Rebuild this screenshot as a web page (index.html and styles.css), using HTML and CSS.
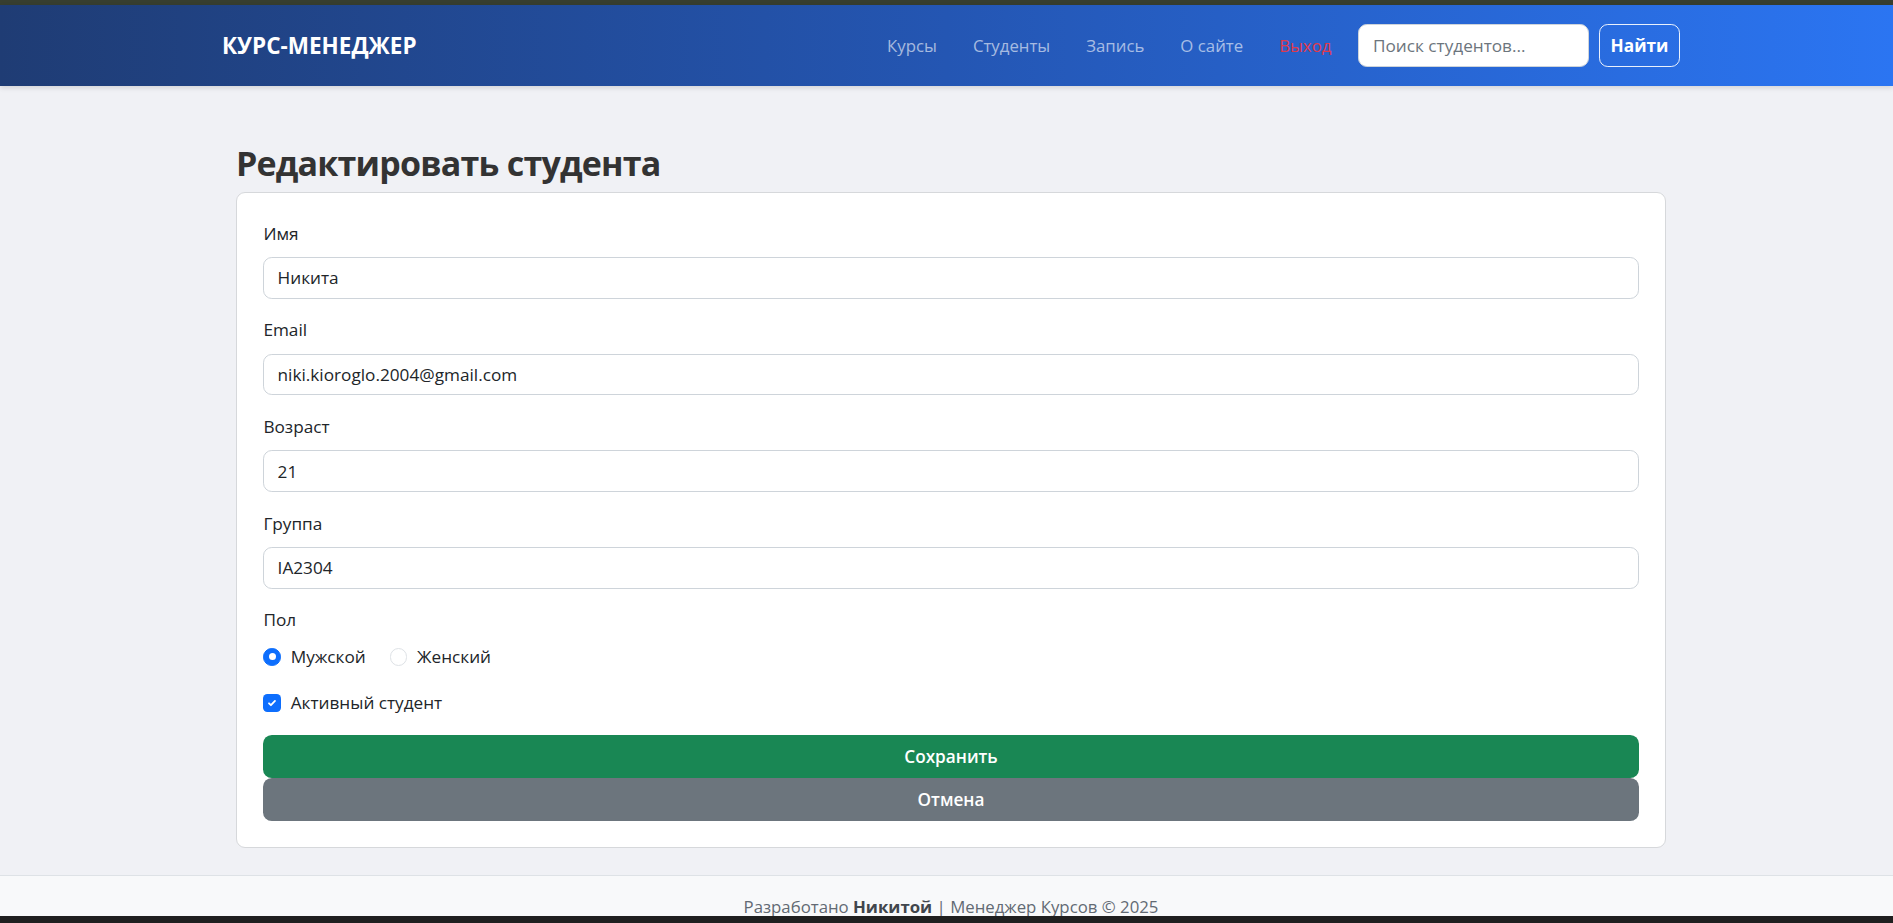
FILE: index.html
```html
<!DOCTYPE html>
<html lang="ru">
<head>
<meta charset="utf-8">
<title>Редактировать студента</title>
<link rel="stylesheet" href="styles.css">
</head>
<body>
<div class="topstrip"></div>
<nav class="navbar">
  <div class="nav-inner">
    <a class="brand" href="#">КУРС-МЕНЕДЖЕР</a>
    <div class="nav-right">
      <ul class="nav-links">
        <li><a href="#">Курсы</a></li>
        <li><a href="#">Студенты</a></li>
        <li><a href="#">Запись</a></li>
        <li><a href="#">О сайте</a></li>
        <li><a href="#" class="logout">Выход</a></li>
      </ul>
      <form class="search">
        <input type="text" class="search-input" placeholder="Поиск студентов...">
        <button type="button" class="search-btn">Найти</button>
      </form>
    </div>
  </div>
</nav>

<main class="main">
  <h2 class="title">Редактировать студента</h2>
  <div class="card">
    <form class="edit-form">
      <div class="field">
        <label class="form-label">Имя</label>
        <input class="form-control" type="text" value="Никита">
      </div>
      <div class="field">
        <label class="form-label">Email</label>
        <input class="form-control" type="text" value="niki.kioroglo.2004@gmail.com">
      </div>
      <div class="field">
        <label class="form-label">Возраст</label>
        <input class="form-control" type="text" value="21">
      </div>
      <div class="field">
        <label class="form-label">Группа</label>
        <input class="form-control" type="text" value="IA2304">
      </div>
      <div class="field field-gender">
        <label class="form-label">Пол</label>
        <div class="radios">
          <label class="choice"><span class="radio radio-on"></span>Мужской</label>
          <label class="choice"><span class="radio"></span>Женский</label>
        </div>
      </div>
      <div class="check-row">
        <label class="choice"><span class="checkbox"><svg viewBox="0 0 20 20" width="12" height="12"><path d="M5 10.5l3.2 3.2L15 6.5" fill="none" stroke="#fff" stroke-width="3" stroke-linecap="round" stroke-linejoin="round"/></svg></span>Активный студент</label>
      </div>
      <div class="actions">
        <button type="button" class="btn btn-save">Сохранить</button>
        <button type="button" class="btn btn-cancel">Отмена</button>
      </div>
    </form>
  </div>
</main>

<footer class="footer">
  <div class="footer-inner">
    <p>Разработано <strong>Никитой</strong> | Менеджер Курсов © 2025</p>
  </div>
</footer>
<div class="taskbar"></div>
</body>
</html>
```

FILE: styles.css
```css
html, body {
  margin: 0;
  padding: 0;
}
body {
  background: #f0f1f5;
  font-family: "Open Sans", "Noto Sans", sans-serif;
  font-size: 17.2px;
  line-height: 1.5;
  color: #212529;
}

.topstrip {
  height: 5px;
  background: #373e2f;
}

.navbar {
  height: 81px;
  background: linear-gradient(90deg, #1f3c74 0%, #2456b3 50%, #2b75f2 100%);
  box-shadow: 0 2px 5px rgba(0, 0, 0, 0.12);
  display: flex;
  align-items: center;
  position: relative;
}
.nav-inner {
  margin-left: 222px;
  width: 1458px;
  display: flex;
  align-items: center;
  justify-content: space-between;
}
.brand {
  color: #fff;
  font-weight: 700;
  font-size: 22.5px;
  text-decoration: none;
}
.nav-right {
  display: flex;
  align-items: center;
}
.nav-links {
  display: flex;
  list-style: none;
  margin: 0;
  padding: 0;
}
.nav-links a {
  display: block;
  padding: 8px 18px;
  color: rgba(255, 255, 255, 0.6);
  text-decoration: none;
  font-size: 16.8px;
}
.nav-links a.logout {
  color: #e03a4c;
}
.search {
  display: flex;
  gap: 10px;
  margin: 0 0 0 8.6px;
}
.search-input {
  width: 231px;
  height: 43px;
  box-sizing: border-box;
  border: 1px solid #ced4da;
  border-radius: 8.8px;
  padding: 0 14px;
  font-family: inherit;
  font-size: 17.2px;
  color: #212529;
  background: #fff;
}
.search-input::placeholder {
  color: #6c757d;
}
.search-btn {
  width: 81px;
  height: 43px;
  box-sizing: border-box;
  border: 1px solid rgba(255, 255, 255, 0.9);
  border-radius: 8.8px;
  background: transparent;
  color: #fff;
  font-family: inherit;
  font-weight: 700;
  font-size: 17.2px;
}

.main {
  margin-left: 236px;
  width: 1430px;
  padding-top: 56.5px;
}
.title {
  margin: 0 0 8.8px;
  font-size: 34px;
  line-height: 41px;
  letter-spacing: -0.8px;
  font-weight: 700;
  color: #333;
}
.card {
  background: #fff;
  border: 1px solid #d6d8db;
  border-radius: 9px;
  padding: 26.4px;
}
.field {
  margin-bottom: 17.6px;
}
.form-label {
  display: block;
  line-height: 28.5px;
  margin-bottom: 8.8px;
}
.form-control {
  display: block;
  width: 100%;
  box-sizing: border-box;
  height: 41.8px;
  padding: 0 13.2px;
  border: 1px solid #ced4da;
  border-radius: 8.8px;
  font-family: inherit;
  font-size: 17.2px;
  color: #212529;
  background: #fff;
}
.field-gender {
  margin-bottom: 19.8px;
}
.radios {
  display: flex;
  gap: 24px;
  height: 26.4px;
  align-items: center;
}
.choice {
  display: inline-flex;
  align-items: center;
  height: 26.4px;
}
.radio {
  width: 17.6px;
  height: 17.6px;
  box-sizing: border-box;
  border-radius: 50%;
  border: 1px solid #dee2e6;
  background: #fff;
  margin-right: 9.7px;
  display: inline-flex;
  align-items: center;
  justify-content: center;
}
.radio-on {
  background: #0d6efd;
  border-color: #0d6efd;
}
.radio-on::after {
  content: "";
  width: 7px;
  height: 7px;
  border-radius: 50%;
  background: #fff;
}
.check-row {
  margin-bottom: 18.6px;
}
.checkbox {
  width: 17.6px;
  height: 17.6px;
  border-radius: 4.4px;
  background: #0d6efd;
  margin-right: 9.7px;
  display: inline-flex;
  align-items: center;
  justify-content: center;
}
.actions {
  display: flex;
  flex-direction: column;
}
.btn {
  height: 43px;
  border: none;
  border-radius: 8.8px;
  color: #fff;
  font-family: inherit;
  font-weight: 600;
  font-size: 17.2px;
  width: 100%;
}
.btn-save {
  background: #198754;
}
.btn-cancel {
  background: #6c757d;
}

.footer {
  margin-top: 26.5px;
  border-top: 1px solid #dee2e6;
  background: #f8f9fa;
  padding: 18.4px 0 24px;
}
.footer-inner {
  margin-left: 236px;
  width: 1430px;
}
.footer p {
  margin: 0;
  text-align: center;
  font-size: 16.8px;
  line-height: 25.2px;
  color: #626a73;
}
.footer strong {
  color: #41464c;
}
.taskbar {
  position: fixed;
  left: 0;
  right: 0;
  bottom: 0;
  height: 7px;
  background: #1f1f1f;
}
```
